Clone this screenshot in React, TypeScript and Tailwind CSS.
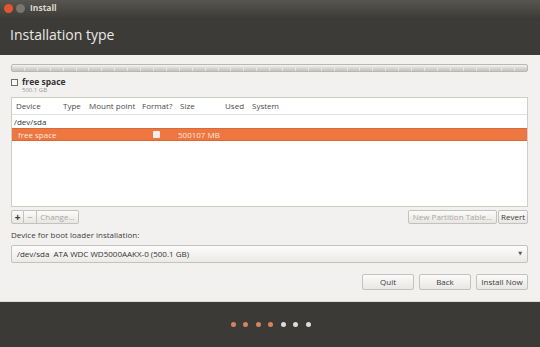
import React from "react";

const font = { fontFamily: '"Open Sans", "Noto Sans", "DejaVu Sans", sans-serif' };

function Btn({ children, className = "", disabled = false }: { children: React.ReactNode; className?: string; disabled?: boolean }) {
  return (
    <div
      className={`flex items-center justify-center rounded-[2px] border border-[#c4c2bd] bg-gradient-to-b from-[#fbfbfa] to-[#e8e7e4] text-[8px] ${disabled ? "text-[#a9a7a2]" : "text-[#3c3c3c]"} ${className}`}
    >
      {children}
    </div>
  );
}

export default function App() {
  const ticks = Array.from({ length: 40 });
  return (
    <div className="w-[540px] h-[347px] flex flex-col bg-[#3c3b37] overflow-hidden" style={font}>
      {/* title bar */}
      <div className="h-[17px] flex items-center bg-gradient-to-b from-[#56554f] to-[#3f3e39] pl-[4px]">
        <div className="w-[9px] h-[9px] rounded-full bg-[#e2562e]" />
        <div className="w-[9px] h-[9px] rounded-full bg-[#77766f] ml-[3px]" />
        <span className="ml-[5px] text-[8.5px] font-bold text-[#dcd9d0] leading-none">Install</span>
      </div>
      {/* header */}
      <div className="h-[38px] flex items-center pl-[10px] pb-[2px]">
        <span className="text-[14px] text-[#ebe9e3] leading-none">Installation type</span>
      </div>
      {/* content */}
      <div className="h-[246px] bg-[#f2f1f0] flex flex-col px-[11px] pr-[12px] pt-[9px]">
        {/* partition bar */}
        <div className="h-[8px] rounded-[2px] border border-[#b9b8b3] bg-gradient-to-b from-[#f6f6f5] via-[#d9d8d5] to-[#c4c3bf] flex">
          {ticks.map((_, i) => (
            <div key={i} className="flex-1 border-r border-[#e9e8e6] last:border-r-0" />
          ))}
        </div>
        {/* legend */}
        <div className="flex mt-[3px] h-[18px]">
          <div className="w-[7px] h-[7px] border border-[#6e6d69] bg-[#f7f7f6] mt-[4px]" />
          <div className="flex flex-col ml-[4px]">
            <span className="text-[8.5px] font-bold text-[#333] leading-[13px]">free space</span>
            <span className="text-[6px] text-[#9a9894] leading-[5px]">500.1 GB</span>
          </div>
        </div>
        {/* table */}
        <div className="mt-[4px] h-[110px] border border-[#cfcdc8] bg-white flex flex-col text-[8px] text-[#4a4a4a]">
          <div className="h-[17px] flex items-center border-b border-[#e2e1de] relative">
            <span className="absolute left-[4px]">Device</span>
            <span className="absolute left-[51px]">Type</span>
            <span className="absolute left-[77px]">Mount point</span>
            <span className="absolute left-[130px]">Format?</span>
            <span className="absolute left-[168px]">Size</span>
            <span className="absolute left-[213px]">Used</span>
            <span className="absolute left-[240px]">System</span>
          </div>
          <div className="h-[13px] flex items-center pl-[2px] text-[#333]">/dev/sda</div>
          <div className="h-[13px] flex items-center bg-[#ed7641] text-white relative border-y border-[#d96a38]">
            <span className="absolute left-[6px] text-[#fde9dd]">free space</span>
            <div className="absolute left-[141px] top-[2px] w-[7px] h-[7px] rounded-[1px] bg-[#f6efe9]" />
            <span className="absolute left-[166px] text-[#fde9dd]">500107 MB</span>
          </div>
        </div>
        {/* tools row */}
        <div className="flex mt-[3px] h-[14px]">
          <div className="flex">
            <Btn className="w-[13px] rounded-r-none font-bold text-[10px]">+</Btn>
            <Btn className="w-[13px] rounded-none border-l-0 text-[10px]" disabled>−</Btn>
            <Btn className="w-[42px] rounded-l-none border-l-0" disabled>Change...</Btn>
          </div>
          <div className="flex-1" />
          <Btn className="w-[89px] mr-[1px]" disabled>New Partition Table...</Btn>
          <Btn className="w-[30px]">Revert</Btn>
        </div>
        <div className="mt-[5px] text-[8px] text-[#3c3c3c] leading-[12px]">Device for boot loader installation:</div>
        <div className="mt-[4px] h-[18px] rounded-[2px] border border-[#c4c2bd] bg-gradient-to-b from-[#fcfcfb] to-[#eceae7] flex items-center pl-[5px] pr-[5px] text-[8px] text-[#333]">
          <span className="flex-1">/dev/sda&nbsp; ATA WDC WD5000AAKX-0 (500.1 GB)</span>
          <span className="text-[5px] text-[#555]">▼</span>
        </div>
        <div className="flex justify-end mt-[11px] gap-[5px] h-[16px]">
          <Btn className="w-[52px] text-[8.5px]">Quit</Btn>
          <Btn className="w-[52px] text-[8.5px]">Back</Btn>
          <Btn className="w-[52px] text-[8.5px] border-[#9c9a95]">Install Now</Btn>
        </div>
      </div>
      {/* footer */}
      <div className="h-[1px] bg-[#dedcd8]" />
      <div className="flex-1 flex items-center justify-center gap-[7.5px] bg-[#3b3a36] pl-[1px]">
        {[0, 1, 2, 3].map((i) => (
          <div key={i} className="w-[5px] h-[5px] rounded-full bg-[#d9825e]" />
        ))}
        {[0, 1, 2].map((i) => (
          <div key={i} className="w-[5px] h-[5px] rounded-full bg-[#dedcd6]" />
        ))}
      </div>
    </div>
  );
}
